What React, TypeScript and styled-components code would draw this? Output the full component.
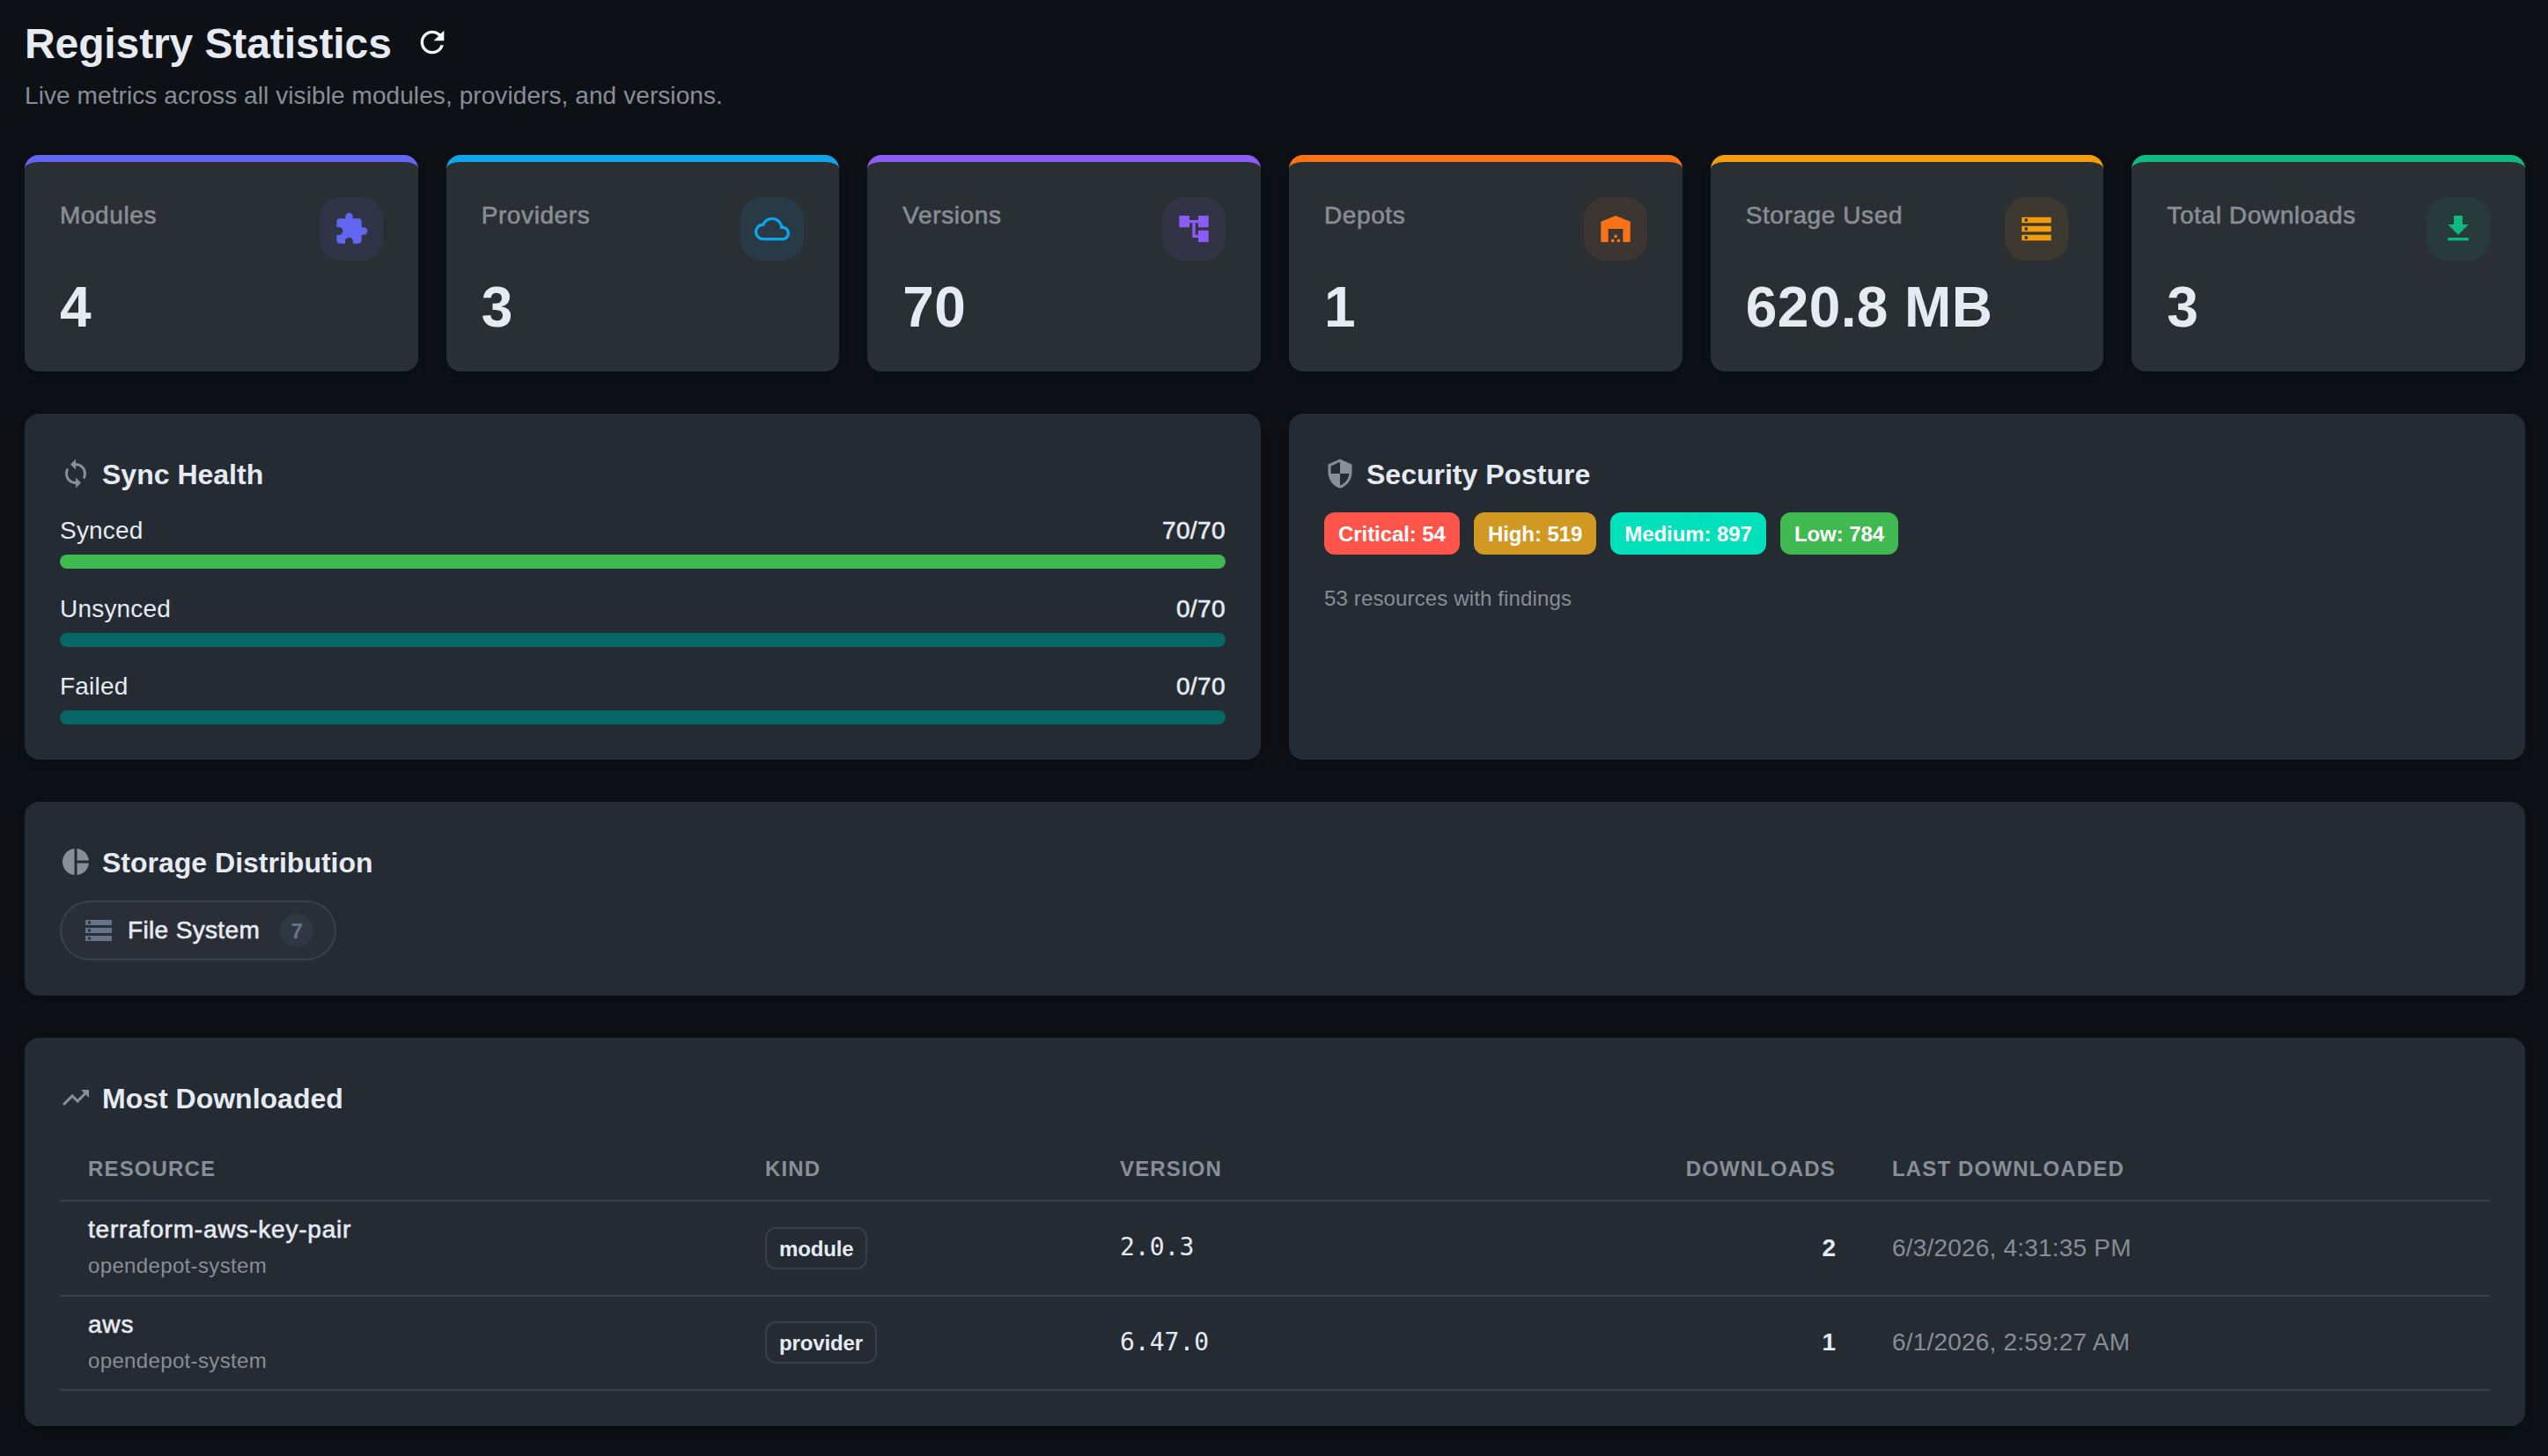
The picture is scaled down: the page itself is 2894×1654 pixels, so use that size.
import type {IconType} from 'react-icons';
import {
	MdAccountTree,
	MdCloudQueue,
	MdDownload,
	MdExtension,
	MdPieChart,
	MdRefresh,
	MdSecurity,
	MdStorage,
	MdSync,
	MdTrendingUp,
} from 'react-icons/md';
import styled, {createGlobalStyle} from 'styled-components';

const GlobalStyle = createGlobalStyle`
	* {
		box-sizing: border-box;
	}

	body {
		margin: 0;
		background-color: #0d1116;
		color: #e6eaf2;
		font-family: 'Liberation Sans', Arial, sans-serif;
		font-size: 28px;
	}
`;

const Page = styled.main`
	display: flex;
	flex-direction: column;
	width: 2894px;
	height: 1654px;
	padding: 22px 26px 0 28px;
`;

const TitleRow = styled.header`
	display: flex;
	align-items: center;
	height: 54px;
	gap: 26px;

	svg {
		margin-bottom: 2px;
		color: #ffffff;
		font-size: 40px;
	}
`;

const Title = styled.h1`
	margin: 0;
	padding-top: 2px;
	font-size: 48px;
	font-weight: 700;
	letter-spacing: -0.11px;
	line-height: 54px;
`;

const Subtitle = styled.p`
	margin: 13px 0 47px;
	color: #888d96;
	font-size: 28px;
	letter-spacing: 0.085px;
	line-height: 40px;
`;

const StatGrid = styled.section`
	display: grid;
	grid-template-columns: repeat(6, 1fr);
	gap: 32px;
	margin-bottom: 48px;
`;

const StatCard = styled.article<{$accent: string}>`
	display: flex;
	flex-direction: column;
	justify-content: space-between;
	height: 246px;
	padding: 40px 40px 41px;
	border-top: 8px solid ${({$accent}) => $accent};
	border-radius: 16px;
	background-color: #2a2f34;
	box-shadow: 0 4px 10px rgba(0, 0, 0, 0.28);
`;

const StatTop = styled.div`
	display: flex;
	justify-content: space-between;
`;

const StatLabel = styled.span`
	padding-top: 4px;
	color: #888d96;
	letter-spacing: 0.6px;
	line-height: 34px;
	-webkit-text-stroke: 0.6px;
`;

const StatIcon = styled.div<{$accent: string}>`
	display: flex;
	align-items: center;
	justify-content: center;
	width: 72px;
	height: 72px;
	border-radius: 24px;
	background-color: ${({$accent}) => $accent}18;
	color: ${({$accent}) => $accent};
	font-size: 40px;
`;

const StatValue = styled.strong`
	font-size: 64px;
	letter-spacing: 0.4px;
	line-height: 64px;
`;

const Panel = styled.section`
	display: flex;
	flex-direction: column;
	margin-bottom: 48px;
	padding: 40px;
	border-radius: 16px;
	background-color: #252b32;
	box-shadow: 0 4px 10px rgba(0, 0, 0, 0.28);
`;

const PanelRow = styled.div`
	display: grid;
	grid-template-columns: 1fr 1fr;
	gap: 32px;
`;

const PanelTitle = styled.h2`
	display: flex;
	align-items: center;
	gap: 12px;
	height: 56px;
	margin: 0 0 4px;
	font-size: 32px;
	font-weight: 700;
	line-height: 38px;

	svg {
		color: #888f9a;
		font-size: 36px;
	}

	span {
		padding-top: 2px;
	}
`;

const SyncList = styled.div`
	display: flex;
	flex-direction: column;
	gap: 12.5px;
`;

const SyncText = styled.div`
	display: flex;
	justify-content: space-between;
	height: 60px;
	padding-top: 8px;
	letter-spacing: 0.2px;
	line-height: 50px;
`;

const Count = styled.span`
	letter-spacing: 0.4px;
	-webkit-text-stroke: 0.6px;
`;

const Bar = styled.div<{$color: string}>`
	height: 16px;
	border-radius: 8px;
	background-color: ${({$color}) => $color};
`;

const Severities = styled.div`
	display: flex;
	gap: 16px;
	margin-top: 12px;
`;

const Severity = styled.span<{$color: string}>`
	height: 48px;
	padding: 0 16px;
	border-radius: 12px;
	background-color: ${({$color}) => $color};
	color: #ffffff;
	font-size: 24px;
	font-weight: 700;
	letter-spacing: -0.07px;
	line-height: 49px;
`;

const Findings = styled.p`
	margin: 33px 0 0;
	color: #888d96;
	font-size: 24px;
	letter-spacing: 0.14px;
	line-height: 34px;
`;

const BackendPill = styled.div`
	display: flex;
	align-items: center;
	align-self: flex-start;
	height: 68px;
	margin-top: 12px;
	padding: 0 24px;
	border: 2px solid #3c4149;
	border-radius: 34px;
	background-color: #2a2e36;

	svg {
		color: #64748b;
		font-size: 36px;
	}
`;

const BackendName = styled.span`
	margin: 0 23px 0 15px;
	letter-spacing: 0.35px;
	-webkit-text-stroke: 0.6px;
`;

const BackendCount = styled.span`
	width: 38px;
	height: 38px;
	border-radius: 19px;
	background-color: #2f3742;
	color: #64748b;
	font-size: 24px;
	font-weight: 700;
	line-height: 40px;
	text-align: center;
`;

const Table = styled.table`
	margin-top: 12px;
	border-spacing: 0;
	table-layout: fixed;
	width: 100%;
`;

const Th = styled.th<{$width: number; $right?: boolean}>`
	width: ${({$width}) => $width}px;
	height: 74px;
	padding: 1px 32px 0;
	border-bottom: 2px solid #3a3f47;
	color: #888f98;
	font-size: 24px;
	letter-spacing: 1.15px;
	text-align: ${({$right}) => ($right ? 'right' : 'left')};
`;

const Td = styled.td<{$right?: boolean}>`
	height: 107.5px;
	padding: 0 32px;
	border-bottom: 2px solid #3a3f47;
	text-align: ${({$right}) => ($right ? 'right' : 'left')};
`;

const ResourceName = styled.div`
	letter-spacing: 0.8px;
	line-height: 40px;
	-webkit-text-stroke: 0.6px;
`;

const Namespace = styled.div`
	padding-top: 1px;
	color: #888d96;
	font-size: 24px;
	letter-spacing: 0.35px;
	line-height: 40px;
`;

const KindTag = styled.span`
	display: inline-block;
	height: 48px;
	padding: 0 14px;
	border: 2px solid #3a3f47;
	border-radius: 12px;
	font-size: 24px;
	font-weight: 700;
	letter-spacing: -0.15px;
	line-height: 46px;
`;

const Version = styled.div`
	padding-bottom: 2px;
	font-family: 'DejaVu Sans Mono', monospace;
	font-size: 28px;
`;

const Timestamp = styled.span`
	color: #888d96;
	letter-spacing: 0.2px;
`;

// Square-cornered warehouse, the icon package only has the rounded one
const Warehouse: React.FC = () => (
	<svg viewBox="0 0 24 24" width="1em" height="1em" fill="currentColor">
		<path d="M22 21V7L12 3 2 7v14h5v-9h10v9h5z" />
		<path d="M11 16h2v2h-2zM9 19h2v2H9zM13 19h2v2h-2z" />
	</svg>
);

type Stat = {
	label: string;
	value: string;
	accent: string;
	icon: IconType | React.FC;
};

const stats: Stat[] = [
	{label: 'Modules', value: '4', accent: '#6366f1', icon: MdExtension},
	{label: 'Providers', value: '3', accent: '#0ea5e9', icon: MdCloudQueue},
	{label: 'Versions', value: '70', accent: '#8b5cf6', icon: MdAccountTree},
	{label: 'Depots', value: '1', accent: '#f97316', icon: Warehouse},
	{label: 'Storage Used', value: '620.8 MB', accent: '#f59e0b', icon: MdStorage},
	{label: 'Total Downloads', value: '3', accent: '#10b981', icon: MdDownload},
];

const syncStates = [
	{label: 'Synced', count: '70/70', color: '#3fb950'},
	{label: 'Unsynced', count: '0/70', color: '#056866'},
	{label: 'Failed', count: '0/70', color: '#056866'},
];

const severities = [
	{label: 'Critical: 54', color: '#ff5449'},
	{label: 'High: 519', color: '#d29922'},
	{label: 'Medium: 897', color: '#00e1bb'},
	{label: 'Low: 784', color: '#3fb950'},
];

const downloads = [
	{
		name: 'terraform-aws-key-pair',
		namespace: 'opendepot-system',
		kind: 'module',
		version: '2.0.3',
		count: 2,
		last: '6/3/2026, 4:31:35 PM',
	},
	{
		name: 'aws',
		namespace: 'opendepot-system',
		kind: 'provider',
		version: '6.47.0',
		count: 1,
		last: '6/1/2026, 2:59:27 AM',
	},
];

const App: React.FC = () => {
	return (
		<Page>
			<GlobalStyle />
			<TitleRow>
				<Title>Registry Statistics</Title>
				<MdRefresh />
			</TitleRow>
			<Subtitle>
				Live metrics across all visible modules, providers, and versions.
			</Subtitle>
			<StatGrid>
				{stats.map(({label, value, accent, icon: Icon}) => (
					<StatCard key={label} $accent={accent}>
						<StatTop>
							<StatLabel>{label}</StatLabel>
							<StatIcon $accent={accent}>
								<Icon />
							</StatIcon>
						</StatTop>
						<StatValue>{value}</StatValue>
					</StatCard>
				))}
			</StatGrid>
			<PanelRow>
				<Panel>
					<PanelTitle>
						<MdSync />
						<span>Sync Health</span>
					</PanelTitle>
					<SyncList>
						{syncStates.map(({label, count, color}) => (
							<div key={label}>
								<SyncText>
									<span>{label}</span>
									<Count>{count}</Count>
								</SyncText>
								<Bar $color={color} />
							</div>
						))}
					</SyncList>
				</Panel>
				<Panel>
					<PanelTitle>
						<MdSecurity />
						<span>Security Posture</span>
					</PanelTitle>
					<Severities>
						{severities.map(({label, color}) => (
							<Severity key={label} $color={color}>
								{label}
							</Severity>
						))}
					</Severities>
					<Findings>53 resources with findings</Findings>
				</Panel>
			</PanelRow>
			<Panel>
				<PanelTitle>
					<MdPieChart />
					<span>Storage Distribution</span>
				</PanelTitle>
				<BackendPill>
					<MdStorage />
					<BackendName>File System</BackendName>
					<BackendCount>7</BackendCount>
				</BackendPill>
			</Panel>
			<Panel>
				<PanelTitle>
					<MdTrendingUp />
					<span>Most Downloaded</span>
				</PanelTitle>
				<Table>
					<thead>
						<tr>
							<Th $width={769}>RESOURCE</Th>
							<Th $width={403}>KIND</Th>
							<Th $width={518}>VERSION</Th>
							<Th $width={359} $right>
								DOWNLOADS
							</Th>
							<Th $width={711}>LAST DOWNLOADED</Th>
						</tr>
					</thead>
					<tbody>
						{downloads.map((row) => (
							<tr key={row.name}>
								<Td>
									<ResourceName>{row.name}</ResourceName>
									<Namespace>{row.namespace}</Namespace>
								</Td>
								<Td>
									<KindTag>{row.kind}</KindTag>
								</Td>
								<Td>
									<Version>{row.version}</Version>
								</Td>
								<Td $right>
									<strong>{row.count}</strong>
								</Td>
								<Td>
									<Timestamp>{row.last}</Timestamp>
								</Td>
							</tr>
						))}
					</tbody>
				</Table>
			</Panel>
		</Page>
	);
};

export default App;
